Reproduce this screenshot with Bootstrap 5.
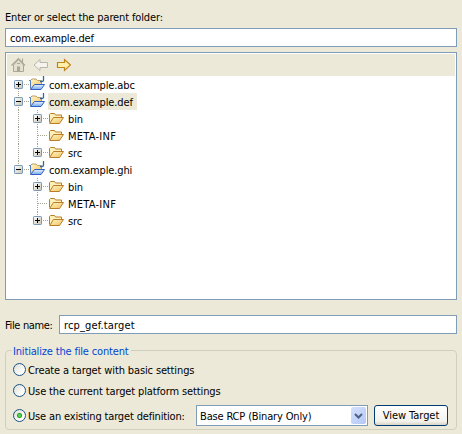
<!DOCTYPE html>
<html lang="en">
<head>
<meta charset="utf-8">
<meta name="viewport" content="width=device-width, initial-scale=1">
<title>New Target Definition</title>
<link href="https://cdn.jsdelivr.net/npm/bootstrap@5.3.0/dist/css/bootstrap.min.css" rel="stylesheet">
<style>
body{background:#ece9d8;color:#000;font:11px/17px Tahoma,"DejaVu Sans Condensed","DejaVu Sans",sans-serif;letter-spacing:-.13px;height:434px;overflow:hidden}
.dialog{width:452px;margin-left:5px;padding-top:9px}
.heading-line{height:19px}
.field.form-control{height:19px;min-height:0;border:1px solid #7f9db9;border-radius:0;padding:1px 4px 0;font:inherit;letter-spacing:inherit;color:#000;background:#fff}
.tree-box{height:248px;margin-top:5px;border:1px solid #7f9db9;background:#fff;padding:1px}
.tools{height:22px;background:#ece9d8;padding-left:4px;gap:6px}
.node{height:17px;padding-left:7px}
svg{display:block;flex:none}
.caption{padding:1px 4px 0 1px;margin-left:2px;line-height:17px;height:17px;letter-spacing:-.14px}
.caption.upper{letter-spacing:.25px}
.chosen{background:#ece9d8}
.filename{margin-top:15px}
.filename span{width:54px;flex:none;padding-top:1px;letter-spacing:-.35px}
.filename .field.form-control{letter-spacing:.14px}
.group-box{height:80px;margin-top:16px;border:1px solid #d0d0bf;border-radius:4px;padding:0 8px 0 7px}
.legend-text{width:119px;height:16px;line-height:17px;margin-top:-8px;margin-left:-1px;padding-left:1px;background:#ece9d8;color:#0046d5;letter-spacing:-.17px}
.choice{height:21px;gap:2px}
.choice span{padding-top:1px}
.choice.last{margin-top:4px;letter-spacing:-.16px}
.form-check-input.dot{width:13px;height:13px;margin:0;border:1px solid #1d5281;background:linear-gradient(135deg,#dcdcd5,#fff 75%);flex:none}
.form-check-input.dot:checked{background:radial-gradient(circle,#55d551 0 1px,#21a121 2px,#21a12100 3.1px),linear-gradient(135deg,#dcdcd5,#fff 75%)}
.combo{width:172px;height:21px;border:1px solid #7f9db9;background:#fff;padding:0 1px 0 3px}
.combo .drop{width:15px;height:17px;padding:0;border-radius:2px;background:linear-gradient(135deg,#d4e0fd,#b4c8f6)}
.view.btn{width:74px;height:21px;padding:0;border:1px solid #003c74;border-radius:3px;font:inherit;letter-spacing:-.05px;line-height:20px;color:#000;background:linear-gradient(#fff,#f3f2ec 80%,#d9d3c6)}
</style>
</head>
<body>
<svg width="0" height="0" class="position-absolute">
<defs>
<linearGradient id="gold" x2="1" y2="1"><stop stop-color="#fff5c8"/><stop offset="1" stop-color="#f2c35b"/></linearGradient>
<linearGradient id="blue" y2="1" x2="0"><stop stop-color="#e8f3ff"/><stop offset="1" stop-color="#79a9ee"/></linearGradient>
<linearGradient id="face" x2="1" y2="1"><stop stop-color="#fff"/><stop offset="1" stop-color="#c9c3b4"/></linearGradient>
<g id="box"><rect x=".5" y=".5" width="8" height="8" rx=".7" fill="url(#face)" stroke="#7898b5"/><path d="M2 4.5h5" stroke="#000"/></g>
<g id="folder"><path d="M.5 11.500V3.500l1-1h4l1 1.500h6v2.500" fill="#fff0b8" stroke="#b87d2c"/><path d="M.7 12.500 4.500 6.500H14.500l-4 6z" fill="url(#gold)" stroke="#b87d2c"/></g>
<g id="project"><path d="M1.500 12.500V4.500l1.500-1.500h4l1.500 1.500h4v4" fill="url(#gold)" stroke="#b9a06a"/><path d="M1.500 12.500V4.500H0" fill="none" stroke="#5680b9"/><path d="M1.500 13.500 5.500 8.500H15.500l-3.500 5z" fill="url(#blue)" stroke="#315fc4"/><path d="M14.500 0v4q0 1.500-1.500 1.500h-2" fill="none" stroke="#34689b" stroke-width="1.300"/></g>
</defs>
</svg>
<main class="dialog">
<div class="heading-line">Enter or select the parent folder:</div>
<input class="field form-control" value="com.example.def" aria-label="Parent folder">
<div class="tree-box">
<div class="tools d-flex align-items-center">
<svg width="16" height="16"><path d="M2.500 8v6.500h10V8L7.500 2.500z" fill="#e3e0d0" stroke="#aaa798"/><path d="M.5 8.500 7.500 1.500l6.500 7M11.500 5.500v-4" fill="none" stroke="#aaa798" stroke-width="1.200"/><path d="M6 14V9.500h3V14z" fill="#aaa798"/><path d="M6 6.500h3" stroke="#aaa798"/></svg>
<svg width="16" height="16"><path d="M1 8 7 2.500v3h7.500v5H7v3z" fill="#f4f3ed" stroke="#b9b7ac"/></svg>
<svg width="16" height="16"><path d="M15.500 8 9.500 2.500v3h-7v5h7v3z" fill="#ffefad" stroke="#bf861b" stroke-width="1.200"/></svg>
</div>
<div class="tree"></div>
</div>
<div class="filename d-flex align-items-center"><span class="text-nowrap">File name:</span><input class="field form-control" value="rcp_gef.target" aria-label="File name"></div>
<div class="group-box">
<div class="legend-text">Initialize the file content</div>
<label class="choice d-flex align-items-center"><input type="radio" name="content" class="dot form-check-input"><span>Create a target with basic settings</span></label>
<label class="choice d-flex align-items-center"><input type="radio" name="content" class="dot form-check-input"><span>Use the current target platform settings</span></label>
<div class="choice last d-flex align-items-center"><input type="radio" name="content" class="dot form-check-input" checked aria-label="Existing target"><span>Use an existing target definition:</span>
<div class="combo d-flex align-items-center justify-content-between ms-auto me-1"><span>Base RCP (Binary Only)</span><span class="drop"><svg width="15" height="17"><path d="m4 7 3.500 3.500L11 7" fill="none" stroke="#4d6185" stroke-width="2"/></svg></span></div>
<button class="view btn">View Target</button></div>
</div>
</main>
<script src="https://cdn.jsdelivr.net/npm/bootstrap@5.3.0/dist/js/bootstrap.bundle.min.js"></script>
<script>
const rows=[["com.example.abc",0,"+"],["com.example.def",0,"-"],["bin",1,"+"],["META-INF",1,""],["src",1,"+"],["com.example.ghi",0,"-"],["bin",1,"+"],["META-INF",1,""],["src",1,"+"]];
const dots='stroke="#a6a391" stroke-dasharray="1 1" fill="none"';
document.querySelector(".tree").innerHTML=rows.map(([name,level,state],i)=>{
  const x=level?19:0;
  let art="";
  if(i<5)art+=`<path d="M4.500 ${i?0:13}V17" ${dots}/>`;
  if(i===5)art+=`<path d="M4.500 0V4" ${dots}/>`;
  if(level)art+=`<path d="M23.500 0V${name==="src"?4:17}" ${dots}/>`;
  art+=`<path d="M${x+(state?10:5)} 8.500H${x+15}" ${dots}/>`;
  if(state)art+=`<use href="#box" x="${x}" y="4"/>`;
  if(state==="+")art+=`<path d="M${x+4.5} 6v5" stroke="#000"/>`;
  art+=`<use href="#${level?"folder":"project"}" x="${level?35:15}" y="${level?1:0}"/>`;
  return `<div class="node d-flex"><svg width="${level?51:32}" height="17">${art}</svg><span class="caption ${i===1?"chosen":""} ${name==="META-INF"?"upper":""}">${name}</span></div>`;
}).join("");
</script>
</body>
</html>
